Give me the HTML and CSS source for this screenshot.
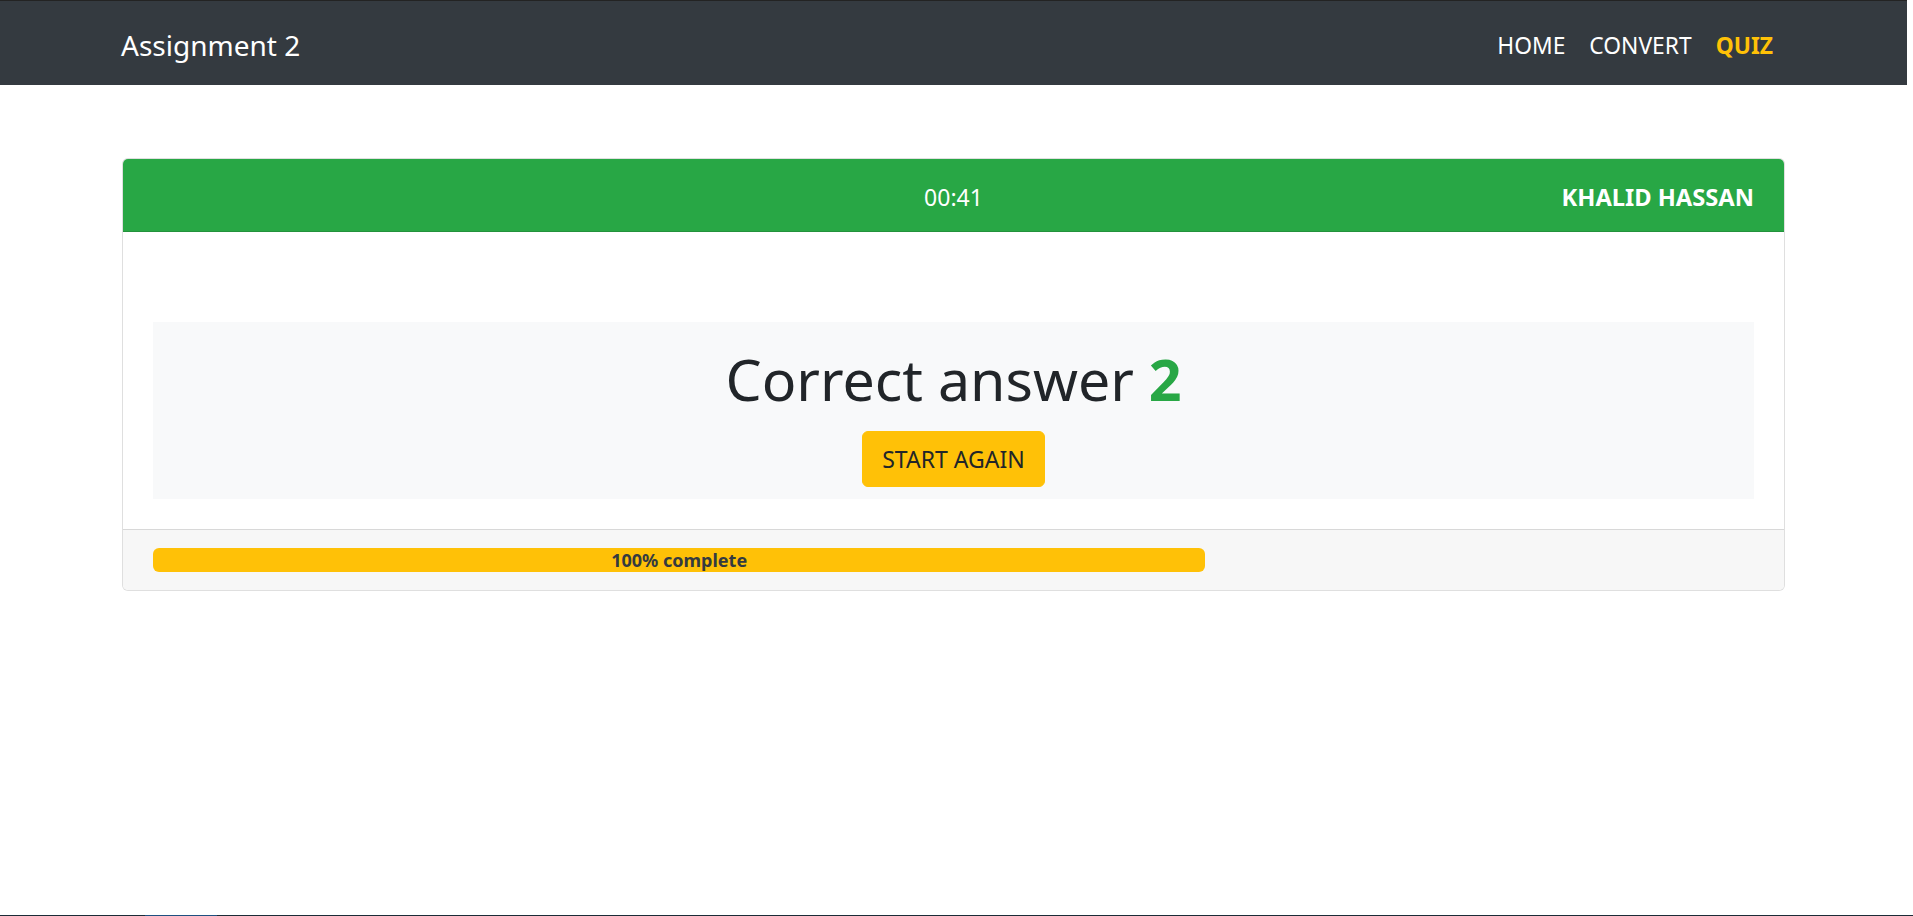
FILE: index.html
```html
<!DOCTYPE html>
<html lang="en">
<head>
<meta charset="utf-8">
<title>Assignment 2 - Quiz</title>
<link rel="stylesheet" href="styles.css">
</head>
<body>
<div class="page">
  <nav class="navbar">
    <div class="container nav-inner">
      <a class="brand" href="#">Assignment 2</a>
      <ul class="nav">
        <li><a class="nav-link" href="#">HOME</a></li>
        <li><a class="nav-link" href="#">CONVERT</a></li>
        <li><a class="nav-link active" href="#">QUIZ</a></li>
      </ul>
    </div>
  </nav>

  <main class="main">
    <div class="container">
      <div class="card">
        <div class="card-header">
          <span class="hdr-left"></span>
          <span class="timer">00:41</span>
          <span class="user">KHALID HASSAN</span>
        </div>
        <div class="card-body">
          <div class="spacer"></div>
          <div class="result">
            <h1 class="result-title">Correct answer <span class="score">2</span></h1>
            <button class="btn-warning" type="button">START AGAIN</button>
          </div>
        </div>
        <div class="card-footer">
          <div class="progress-col">
            <div class="progress">
              <div class="progress-bar" style="width:100%">100% complete</div>
            </div>
          </div>
        </div>
      </div>
    </div>
  </main>

  <div class="taskbar-edge"><span class="taskbar-active"></span></div>
</div>
</body>
</html>
```

FILE: styles.css
```css
* { box-sizing: border-box; }

html, body {
  margin: 0;
  padding: 0;
  background: #ffffff;
}

body {
  font-family: "Noto Sans", "Open Sans", sans-serif;
  color: #212529;
  font-size: 24px;
  line-height: 1.5;
}

.page {
  min-height: 100vh;
  display: flex;
  flex-direction: column;
  padding-right: 6px;
}

.container {
  width: 1663px;
  margin: 0 auto;
}

/* Navbar */
.navbar {
  background: #343a40;
  border-top: 1px solid #232323;
  padding: 12px 0 12px;
}

.nav-inner {
  display: flex;
  align-items: center;
  justify-content: space-between;
  height: 60px;
}

.brand {
  color: #ffffff;
  text-decoration: none;
  font-size: 28px;
  line-height: 45px;
  padding: 10px 0 5px;
  margin-left: -1px;
}

.nav {
  list-style: none;
  margin: 0;
  padding: 0;
  display: flex;
}

.nav-link {
  display: block;
  color: #ffffff;
  text-decoration: none;
  font-size: 22.8px;
  line-height: 36px;
  padding: 15px 12px 9px;
}

.nav-link.active {
  color: #ffc107;
  font-weight: 700;
}

/* Main */
.main {
  flex: 1;
  padding-top: 73px;
}

.card {
  border: 1px solid rgba(0, 0, 0, 0.125);
  border-radius: 6px;
  background: #ffffff;
  overflow: hidden;
}

.card-header {
  background: #28a745;
  color: #ffffff;
  padding: 20px 30px 16px;
  line-height: 36px;
  font-size: 23px;
  border-bottom: 1px solid rgba(0, 0, 0, 0.125);
  display: grid;
  grid-template-columns: 1fr auto 1fr;
  align-items: center;
}

.timer {
  text-align: center;
}

.user {
  justify-self: end;
  font-weight: 700;
  font-size: 23.7px;
}

.card-body {
  padding: 30px 30px 30px;
}

.spacer {
  height: 60px;
}

.result {
  background: #f8f9fa;
  padding: 21px 0 12px;
  display: flex;
  flex-direction: column;
  align-items: center;
}

.result-title {
  margin: 0 0 16px;
  font-size: 57.3px;
  line-height: 72px;
  font-weight: 400;
  color: #212529;
}

.score {
  color: #28a745;
  font-weight: 700;
}

.btn-warning {
  font-family: inherit;
  font-size: 23px;
  line-height: 36px;
  color: #212529;
  background: #ffc107;
  border: 1px solid #ffc107;
  border-radius: 6px;
  padding: 9px 19px;
  cursor: pointer;
}

/* Footer */
.card-footer {
  background: #f7f7f7;
  border-top: 1px solid rgba(0, 0, 0, 0.125);
  padding: 18px 30px 18px;
}

.progress-col {
  width: calc((100% + 45px) * 2 / 3 - 45px);
}

.progress {
  height: 24px;
  background: #e9ecef;
  border-radius: 6px;
  overflow: hidden;
  display: flex;
}

.progress-bar {
  background: #ffc107;
  color: #343a40;
  font-size: 18px;
  font-weight: 700;
  line-height: 24px;
  text-align: center;
  white-space: nowrap;
}

/* Bottom edge of the desktop taskbar */
.taskbar-edge {
  height: 1px;
  background: #1b2b37;
  margin-right: -6px;
  display: flex;
  padding-left: 145px;
}

.taskbar-active {
  width: 72px;
  background: #1f5080;
}
```
